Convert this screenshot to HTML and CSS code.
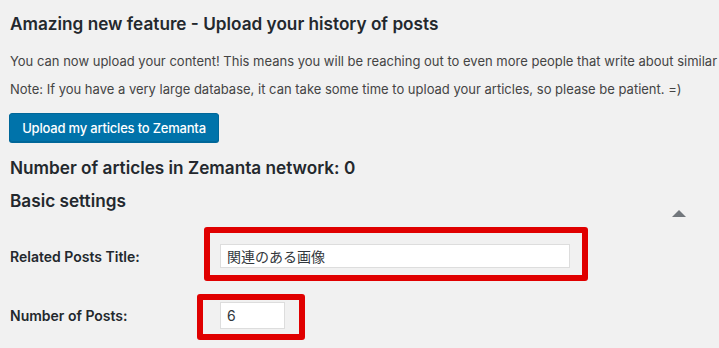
FILE: index.html
```html
<!DOCTYPE html>
<html lang="en">
<head>
  <meta charset="UTF-8" />
  <meta name="viewport" content="width=device-width, initial-scale=1.0" />
  <title>Zemanta Related Posts Settings</title>
  <link rel="stylesheet" href="styles.css">
</head>
<body>
  <div class="wrap">
    <h3 class="title">Amazing new feature - Upload your history of posts</h3>
    <p class="note">You can now upload your content! This means you will be reaching out to even more people that write about similar</p>
    <p class="note">Note: If you have a very large database, it can take some time to upload your articles, so please be patient. =)</p>
    <button class="button-primary">Upload my articles to Zemanta</button>

    <h3 class="title count">Number of articles in Zemanta network: 0</h3>

    <div class="section-head">
      <h3 class="title">Basic settings</h3>
      <span class="toggle-arrow"></span>
    </div>

    <!-- Settings form -->
    <div class="form-table">
      <div class="form-row first">
        <label class="field-label" for="relatedTitle">Related Posts Title:</label>
        <div class="field">
          <input type="text" id="relatedTitle" class="text-wide" value="関連のある画像" />
          <span class="highlight highlight-title"></span>
        </div>
      </div>
      <div class="form-row">
        <label class="field-label" for="postCount">Number of Posts:</label>
        <div class="field">
          <input type="text" id="postCount" class="text-small" value="6" />
          <span class="highlight highlight-count"></span>
        </div>
      </div>
    </div>
  </div>
</body>
</html>
```

FILE: styles.css
```css
/* Global Styles */
html, body {
  margin: 0;
  background: #f1f1f1;
}

body {
  font-family: Inter, "Noto Sans CJK JP", sans-serif;
  color: #23282d;
}

.wrap {
  padding: 0 0 30px 10px;
}

/* Headings */
.title {
  margin: 14px 0 0;
  font-size: 17.2px;
  line-height: 20px;
  font-weight: 600;
}

.note {
  margin: 18px 0 0;
  font-size: 13px;
  line-height: 19px;
  color: #444;
  white-space: nowrap;
}

.note + .note {
  margin-top: 9px;
}

/* Button */
.button-primary {
  display: block;
  margin: 14px 0 0 -1px;
  width: 210px;
  height: 29px;
  padding: 0;
  background: #0073aa;
  border: 1px solid #006799;
  border-radius: 3px;
  box-shadow: 0 1px 0 #006799;
  color: #fff;
  font-family: Inter, sans-serif;
  font-size: 13px;
  font-weight: 500;
  letter-spacing: -0.2px;
  white-space: nowrap;
  cursor: pointer;
}

.count {
  margin-top: 16px;
}

/* Section header with toggle */
.section-head {
  display: flex;
  justify-content: space-between;
  height: 27px;
  margin-top: 13px;
}

.section-head .title {
  margin: 0;
}

.toggle-arrow {
  align-self: flex-end;
  margin: 0 33px 1px 0;
  width: 0;
  height: 0;
  border-left: 7px solid transparent;
  border-right: 7px solid transparent;
  border-bottom: 7px solid #72777c;
}

/* Form */
.form-row {
  display: grid;
  grid-template-columns: 210px auto;
  justify-content: start;
  align-items: center;
  margin-top: 34px;
}

.form-row.first {
  margin-top: 26px;
}

.field-label {
  font-size: 14px;
  font-weight: 600;
  color: #23282d;
}

.field {
  position: relative;
  display: inline-flex;
}

.field input {
  box-sizing: border-box;
  border: 1px solid #ddd;
  background: #fff;
  padding: 0 6px;
  font-family: Inter, "Noto Sans CJK JP", sans-serif;
  font-size: 14px;
  color: #32373c;
}

.text-wide {
  width: 350px;
  height: 24px;
}

.text-small {
  width: 65px;
  height: 27px;
}

/* Red annotation frames */
.highlight {
  position: absolute;
  border: 6px solid #e00000;
  border-radius: 3px;
  pointer-events: none;
}

.highlight-title {
  left: -16px;
  top: -17px;
  right: -18px;
  bottom: -13px;
}

.highlight-count {
  left: -23px;
  top: -8px;
  right: -20px;
  bottom: -11px;
}
```
